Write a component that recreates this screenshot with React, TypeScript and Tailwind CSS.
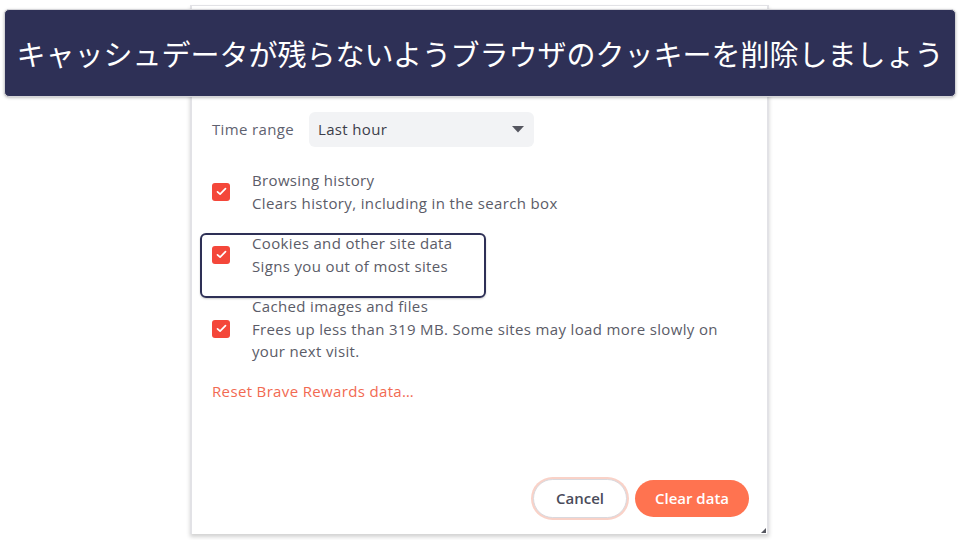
import React from 'react';

const Check = () => (
  <div className="w-[18px] h-[18px] rounded-[3px] bg-[#f4473a] flex items-center justify-center shrink-0">
    <svg width="11" height="9" viewBox="0 0 11 9" fill="none">
      <path d="M1.5 4.8L4.1 7.2L9.5 1.6" stroke="white" strokeWidth="1.7" strokeLinecap="round" strokeLinejoin="round" />
    </svg>
  </div>
);

const App = () => {
  const items = [
    { title: 'Browsing history', lines: ['Clears history, including in the search box'] },
    { title: 'Cookies and other site data', lines: ['Signs you out of most sites'], highlight: true },
    { title: 'Cached images and files', lines: ['Frees up less than 319 MB. Some sites may load more slowly on', 'your next visit.'] },
  ];

  return (
    <div className="w-[960px] h-[540px] bg-white relative overflow-hidden font-['Open_Sans',sans-serif]">
      {/* Dialog */}
      <div className="ml-[190px] mt-[5px] w-[579px] h-[529px] bg-white border-l-2 border-r-2 border-t border-[#e2e2e6] shadow-[0_3px_4px_rgba(0,0,0,0.18)] flex flex-col relative">
        <div className="pl-[20px] pt-[106px]">
          {/* Time range */}
          <div className="flex items-center h-[35px]">
            <span className="w-[97px] text-[15px] tracking-[0.35px] text-[#5f6270]">Time range</span>
            <div className="w-[225px] h-[35px] rounded-[6px] bg-[#f2f3f5] flex items-center justify-between pl-[9px] pr-[10px]">
              <span className="text-[15px] tracking-[0.35px] text-[#3c3d4a]">Last hour</span>
              <svg width="12" height="7" viewBox="0 0 12 7">
                <path d="M0 0H12L6 6.5Z" fill="#55565f" />
              </svg>
            </div>
          </div>

          {/* Items */}
          <div className="mt-[22px] flex flex-col gap-[18px]">
            {items.map((it) => (
              <div key={it.title} className="relative flex items-center gap-[22px]">
                {it.highlight && (
                  <div className="absolute left-[-12px] top-[1px] w-[286px] h-[65px] border-2 border-[#2e3056] rounded-[6px] shadow-[0_1px_2px_rgba(0,0,0,0.2)]" />
                )}
                <Check />
                <div className="text-[15px] tracking-[0.35px] leading-[22.5px] text-[#5b5c68]">
                  <div>{it.title}</div>
                  {it.lines.map((l) => (
                    <div key={l}>{l}</div>
                  ))}
                </div>
              </div>
            ))}
          </div>

          <div className="mt-[17px] text-[15px] tracking-[0.35px] leading-[22px] text-[#f26a52]">Reset Brave Rewards data…</div>
        </div>

        {/* Buttons */}
        <div className="mt-auto flex justify-end items-center gap-[8px] pr-[18px] pb-[16px]">
          <button className="w-[94px] h-[39px] rounded-full bg-white border border-[#d9d9de] ring-2 ring-[#f9d2c8] text-[15px] font-semibold text-[#4a4b5a]">
            Cancel
          </button>
          <button className="w-[114px] h-[37px] rounded-full bg-[#ff7350] text-[15px] font-semibold text-white">
            Clear data
          </button>
        </div>
        <svg className="absolute right-[1px] bottom-[1px]" width="5" height="5" viewBox="0 0 5 5">
          <path d="M5 0V5H0Z" fill="#55565f" />
        </svg>
      </div>

      {/* Banner */}
      <div className="absolute left-[4px] top-[9px] w-[952px] h-[88px] rounded-[5px] bg-[#2e3056] border border-[#d4d4d8] shadow-[0_1px_3px_rgba(0,0,0,0.25)] flex items-center justify-center">
        <span className="text-white text-[29px] leading-none whitespace-nowrap font-['Noto_Sans_CJK_JP',sans-serif]">
          キャッシュデータが残らないようブラウザのクッキーを削除しましょう
        </span>
      </div>
    </div>
  );
};

export default App;
